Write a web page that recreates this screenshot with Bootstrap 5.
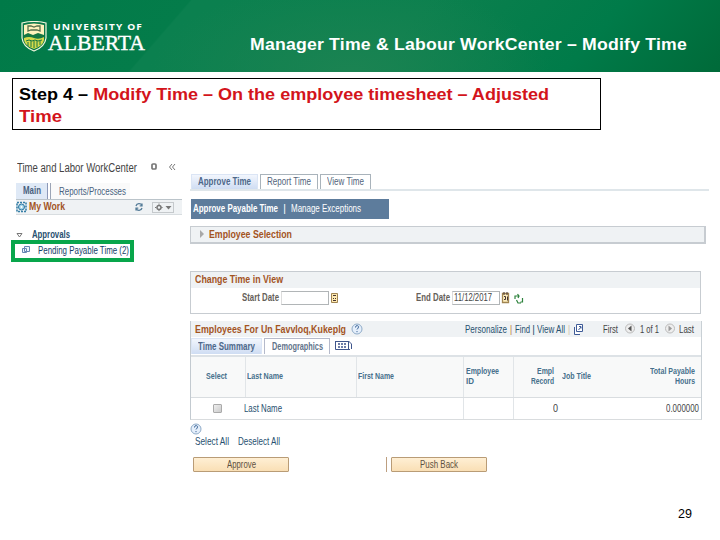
<!DOCTYPE html>
<html lang="en">
<head>
<meta charset="utf-8">
<meta name="viewport" content="width=device-width, initial-scale=1">
<title>Manager Time &amp; Labour WorkCenter – Modify Time</title>
<link href="https://cdn.jsdelivr.net/npm/bootstrap@5.3.0/dist/css/bootstrap.min.css" rel="stylesheet">
<style>
*{box-sizing:border-box}
body{width:720px;height:540px;overflow:hidden;background:#fff;font-family:"Liberation Sans",Arial,sans-serif;font-size:10.2px;line-height:12px;color:#444;white-space:nowrap}
[data-w]{display:inline-block;flex:none;white-space:nowrap;transform-origin:0 50%}
.topbar{height:72px;background:radial-gradient(ellipse 200px 90px at 350px 72px,#1b8352,transparent),linear-gradient(131deg,#007a48 0,#047c4a 24.3%,#0b804f 24.600%,#0c804e 55%,#007b49 80%,#006a39 100%);color:#fff;padding:20px 33px 0 21px}
.crest{margin-top:1px}
.uni{width:100px;margin-left:1px}
.uni .u1{font:bold 9px/9px "Open Sans",sans-serif;letter-spacing:1px;padding:2px 0 0 5px;height:12px}
.uni .u2{font:21.5px/20px "Liberation Serif",serif;-webkit-text-stroke:.4px #fff;padding-top:1px}
.uni .u2 span{line-height:18px}
.headline{font-size:17px;font-weight:700;line-height:20px;margin-top:15px;letter-spacing:.2px}
.step{margin:6px 0 0 12px;width:589px;height:52px;border:1px solid #000;padding:4px 6px 0;font-size:17.400px;line-height:22px;font-weight:700;color:#000}
.step .red{color:#d3141b}
.work{height:350px;margin-top:26px}
.left{width:190px;padding-left:16px}
.side-title{height:27px;padding:6px 0 0 1px;font-size:12px}
.side-tabs{height:16px;color:#49627f}
.side-tabs .on{width:32px;background:#dfe9f6;border-right:1px solid #8c98b8;font-weight:700;text-align:center;line-height:15px}
.side-tabs .off{width:80px;margin-left:2px;border-left:1px solid #9ca5b6;padding:3px 0 0 8px;background:#fafafa}
.mywork{width:166px;height:16px;background:#eff2f4;border-top:1px solid #bbc4ca;border-bottom:1px solid #d8dde0}
.brown{color:#a3541f;font-weight:700}
.navy{color:#27506f}
.gearbtn{width:22px;height:11px;border:1px solid #c5c9cc}
.pend{margin-left:-5px;width:123px;height:22px;border:4px solid #08a64b;color:#143d68}
.right{width:519px;padding-top:18px}
.tabs{height:17px;border-bottom:2px solid #dfe6ea;padding-left:1px}
.tabs>div{height:15px;line-height:14px;text-align:center;border:1px solid #a9b3bb;border-bottom:0;color:#52647b;margin-right:2px}
.tabs>.on,.grid-tabs>.on{background:linear-gradient(#f2f6fd,#cfddf3);border-color:#dbe5f5;font-weight:700;color:#4d688a}
.bluebar{margin:8px 0 0 1px;width:198px;height:20px;background:#5d7c9c;color:#fff;padding:0 0 1px 2px}
.selection{margin-top:7px;width:516px;height:18px;background:#eff2f4;border:1px solid #c7ccd1;border-bottom-width:2px;border-right-width:2px;padding-left:9px;padding-bottom:2px;font-size:11px}
.change{margin-top:27px;width:511px;height:43px;border:1px solid #c7ccd1}
.cap{height:16px;line-height:15px;background:#eff2f4;padding-left:4px}
.cap .brown,.change .cap{font-size:11px}
.dates{height:19px}
.dates b{color:#665f5a}
.field{width:48px;height:14px;border:1px solid #b1b5b7;border-left-color:#ddd;line-height:12px}
.employees{margin-top:7px;width:512px;height:99px;border-left:1px solid #c3cad0;border-right:1px solid #c9d0d5;border-bottom:1px solid #d9dcde}
.grid-tabs{height:18px;padding-top:1px}
.grid-tabs>div{height:16px;line-height:15px;border:1px solid #b5bacb;border-bottom:0;text-align:center;color:#62748b}
.cols{display:grid;grid-template-columns:55px 111px 107px 50px 43px 144px}
.heads{height:43px;background:#f8f9f9;border-top:2px solid #dde2e6;border-bottom:1px solid #d9dde0;font-weight:700;color:#46708c;font-size:9.2px;line-height:10px;padding-bottom:3px}
.heads>div,.vals>div{display:flex;align-items:center;border-right:1px solid #e1e5e8}
.heads>div{margin-bottom:-3px;padding-bottom:3px}
.heads>div:last-child,.vals>div:last-child{border-right:0}
.vals{height:21px}
.stack{display:flex;flex-direction:column;align-items:flex-end}
.cb{width:9px;height:9px;background:linear-gradient(135deg,#eee,#ccc);border:1px solid #aaa;border-radius:1px}
.act{width:96px;height:15px;line-height:13px;border:1px solid #b99c76;border-radius:1px;background:linear-gradient(#ffefd4,#f9dfb5);text-align:center;color:#5e5140}
.page-no{width:28px;margin-left:678px;font-size:12px;line-height:14px;color:#000;padding-top:1px}
svg{display:block;flex:none}
</style>
</head>
<body>
<header class="topbar d-flex justify-content-between">
 <div class="d-flex">
  <svg class="crest" width="26" height="31" viewBox="0 0 26 31"><path d="M1 2Q13-1 25 2V17Q24 26 13 30Q2 26 1 17Z" fill="#087848" stroke="#f5f8df" stroke-width="1.2"/><path d="M3 4Q13 1 23 4V14H3Z" fill="#fff3bd"/><path d="M7 10V5h3l3 1 3-1h3v5l-3-1H10Z" fill="#fff3bd" stroke="#54704c" stroke-width="1.3"/><path d="M3 14l4-2 5 2 5-2 6 2v3H3Z" fill="#157743"/><path d="M3 17q5-2 10 0t10-1v3q-1 6-10 9Q4 25 3 19Z" fill="#d5d94b"/><path d="M5 20l3-1 3 1 3-1 3 1 4-1M7 21v4m3-5v6m3-6v7m3-7v6m3-6v4" stroke="#187744" fill="none"/></svg>
  <div class="uni"><div class="u1"><span data-w="90">UNIVERSITY OF</span></div><div class="u2"><span data-w="97">ALBERTA</span></div></div>
 </div>
 <h1 class="headline mb-0"><span data-w="437">Manager Time &amp; Labour WorkCenter – Modify Time</span></h1>
</header>
<div class="step"><div><span data-w="530">Step 4 – <span class="red">Modify Time – On the employee timesheet – Adjusted</span></span></div><div class="red"><span data-w="43">Time</span></div></div>
<main class="work d-flex">
 <aside class="left">
  <div class="side-title d-flex"><span data-w="120">Time and Labor WorkCenter</span>
   <svg style="margin-left:14px" width="32" height="12" viewBox="0 0 32 12" fill="none" stroke="#777"><rect x="1" y="2" width="4" height="5" rx="1" stroke-width="1.7"/><path d="M21 2l-2.500 3 2.500 3m3-6l-2.500 3 2.500 3"/></svg></div>
  <div class="side-tabs d-flex"><div class="on"><span data-w="18">Main</span></div><div class="off"><span data-w="67">Reports/Processes</span></div></div>
  <div class="mywork d-flex align-items-center">
   <svg width="11" height="12" viewBox="0 0 11 12" fill="none"><rect x="1" y="1.5" width="9" height="9" stroke="#367fa7" stroke-width="1.6" stroke-dasharray="2 1"/><circle cx="5.5" cy="6" r="3" fill="#a5d5e8" stroke="#28739e"/><circle cx="5.5" cy="6" r="1" fill="#fff"/></svg>
   <span class="brown" style="margin-left:2px;margin-top:-3px;font-size:11px" data-w="36">My Work</span>
   <svg class="ms-auto me-2" width="10" height="10" viewBox="0 0 10 10" fill="none" stroke="#557c98" stroke-width="1.3"><path d="M2 4a3.200 3.200 0 0 1 6-.5M8 1.500v2.300H5.700M8 6a3.200 3.200 0 0 1-6 .5M2 8.500V6.200h2.300"/></svg>
   <div class="gearbtn me-2"><svg width="20" height="9" viewBox="0 0 20 9"><circle cx="6" cy="4.500" r="2" fill="none" stroke="#777" stroke-width="1.5"/><path d="M6 .5v8M2 4.500h8" stroke="#777" stroke-dasharray="1.3 5"/><path d="M12.500 3h6L15.500 6.500Z" fill="#777"/></svg></div>
  </div>
  <div class="d-flex align-items-end fw-bold navy" style="height:25px">
   <svg width="16" height="9" viewBox="0 0 16 9"><path d="M1 2.500h5L3.500 6Z" fill="#fff" stroke="#777"/></svg><span style="line-height:10px" data-w="38">Approvals</span></div>
  <div class="pend d-flex align-items-center">
   <svg width="22.500" height="12" viewBox="0 0 22.500 12" fill="#eef4fc" stroke="#6685b3"><path d="M9.500 1.500h5v5h-5ZM7.500 3.500h4v4H7.500Z"/></svg><span data-w="91">Pending Payable Time (2)</span></div>
 </aside>
 <section class="right">
  <div class="tabs d-flex"><div class="on" style="width:67px"><span data-w="53">Approve Time</span></div><div style="width:58px"><span data-w="44">Report Time</span></div><div style="width:51px"><span data-w="37">View Time</span></div></div>
  <div class="bluebar d-flex align-items-center"><b data-w="85">Approve Payable Time</b><span class="text-center" style="width:13px">|</span><span data-w="70">Manage Exceptions</span></div>
  <div class="selection d-flex align-items-center"><svg width="8.500" height="10" viewBox="0 0 8.500 10"><path d="M0 1l4 4-4 4Z" fill="#a8a8a8"/></svg><span class="brown" data-w="83">Employee Selection</span></div>
  <div class="change"><div class="cap brown"><span data-w="88">Change Time in View</span></div>
   <div class="dates d-flex align-items-center"><b style="padding-left:51px"></b><b data-w="37">Start Date</b><div class="field" style="margin-left:2px"></div>
    <svg width="11" height="12" viewBox="0 0 11 12"><path d="M2.500 1.500h6v9h-6Z" fill="#ffeab1" stroke="#a18551"/><path d="M4 3.500h3M4 6.500h1m1 0h1M4 8.500h3" stroke="#433"/></svg>
    <div style="margin-left:76px"><b data-w="34">End Date</b></div><div class="field" style="margin-left:2px;padding-left:1px"><span data-w="38">11/12/2017</span></div>
    <svg width="24" height="14" viewBox="0 0 24 14" fill="none"><path d="M2.500 2.500h6v9h-6Z" fill="#ffefbd" stroke="#a18551" stroke-width="1.3"/><path d="M4 1v3m3-3v3M4 5.500h1.500v3H4m3.500-3v4" stroke="#433"/><path d="M15 8V5h4M17.500 3L19 5l-1 2M16.500 9l1.500 3H21m1.500-5v4h-2" stroke="#2d823c" stroke-width="1.2"/></svg>
   </div></div>
  <div class="employees">
   <div class="cap d-flex align-items-center"><span class="brown" data-w="151">Employees For Un Favvloq,Kukeplg</span><svg style="margin-left:5px" width="12" height="12" viewBox="0 0 12 12"><circle cx="6" cy="6" r="5" fill="#e5effb" stroke="#8fabc8"/><path d="M4.500 4.500q0-2 1.700-2 2.300.6 1 2.500L6 6.500M6 8v1.200" fill="none" stroke="#416a9b"/></svg>
    <div class="d-flex align-items-center navy" style="margin-left:102px"><span data-w="42">Personalize</span><span class="text-center" style="width:8px;color:#c49158">|</span><span data-w="15">Find</span><span class="text-center" style="width:7px">|</span><span data-w="28">View All</span><span class="text-center" style="width:8px;color:#d3cbb5">|</span>
    <svg width="11" height="13" viewBox="0 0 11 13" fill="#fff" stroke="#3f5c98"><path d="M3.500 1.500h6v7h-6ZM1.500 4v7.500H7M5.500 7L8 4M6 3.500h2v2"/></svg></div>
    <div style="margin-left:19px"><span data-w="15">First</span></div><svg style="margin-left:6px" width="12" height="12" viewBox="0 0 12 12"><circle cx="6" cy="5.500" r="4.500" fill="#eee" stroke="#bbb"/><path d="M7.500 2.500v6L4 5.500Z" fill="#555"/></svg><div style="margin-left:4px"><span data-w="19">1 of 1</span></div><svg style="margin-left:5px" width="12" height="12" viewBox="0 0 12 12"><circle cx="6" cy="5.500" r="4.500" fill="#eee" stroke="#bbb"/><path d="M4.500 2.500v6L8 5.500Z" fill="#999"/></svg><div style="margin-left:3px"><span data-w="15">Last</span></div></div>
   <div class="grid-tabs d-flex"><div class="on" style="width:71px"><span data-w="57">Time Summary</span></div><div class="fw-bold" style="width:66px;margin-left:2px"><span data-w="51">Demographics</span></div><svg class="ms-1" width="19" height="14" viewBox="0 0 19 14" fill="none" stroke="#40568c"><path d="M1.500 3v8.500H16M1.500 3.500H14M14.500 3l3 3v5M14.500 3v8"/><path d="M4 6h9M4 9h9" stroke-width="1.500" stroke-dasharray="2 1"/></svg></div>
   <div class="heads cols"><div style="padding-left:15px"><span data-w="21">Select</span></div><div style="padding-left:1px"><span data-w="36">Last Name</span></div><div style="padding-left:1px"><span data-w="36">First Name</span></div><div style="padding-left:2px"><div class="stack align-items-start"><span data-w="33">Employee</span><span data-w="8">ID</span></div></div><div class="justify-content-end border-0" style="padding-right:3px"><div class="stack"><span data-w="17">Empl</span><span data-w="23">Record</span></div></div><div class="justify-content-between" style="padding-left:5px;padding-right:6px"><span data-w="29">Job Title</span><div class="stack"><span data-w="45">Total Payable</span><span data-w="20">Hours</span></div></div></div>
   <div class="vals cols"><div class="justify-content-center border-0"><span class="cb" style="margin-right:3px"></span></div><div class="navy border-0"><div style="margin-left:-2px"><span data-w="38">Last Name</span></div></div><div></div><div></div><div class="justify-content-end border-0"><span style="margin-right:-1px"><span data-w="5">0</span></span></div><div class="justify-content-end" style="padding-right:2px"><span data-w="33">0.000000</span></div></div>
  </div>
  <div style="height:16px;padding-top:3px"><svg width="12" height="12" viewBox="0 0 12 12"><circle cx="6" cy="6" r="5" fill="#e5effb" stroke="#8fabc8"/><path d="M4.500 4.500q0-2 1.700-2 2.300.6 1 2.500L6 6.500M6 8v1.200" fill="none" stroke="#416a9b"/></svg></div>
  <div class="d-flex navy" style="padding-left:5px;gap:9px"><div><span data-w="34">Select All</span></div><div><span data-w="42">Deselect All</span></div></div>
  <div class="d-flex" style="margin-top:9px;padding-left:3px"><div class="act"><span data-w="29">Approve</span></div><div style="width:98px;border-right:1px solid #bd9f80"></div><div class="act" style="margin-left:4px"><span data-w="38">Push Back</span></div></div>
 </section>
</main>
<div class="page-no"><span data-w="14">29</span></div>
<script>
document.querySelectorAll('[data-w]').forEach(function (el) {
  var natural = el.getBoundingClientRect().width, target = +el.dataset.w;
  el.style.transform = 'scaleX(' + target / natural + ')';
  if (!el.classList.contains('brown') || !el.parentElement.classList.contains('mywork')) {
    el.style.marginRight = (target - natural) + 'px';
  }
});
</script>
<script src="https://cdn.jsdelivr.net/npm/bootstrap@5.3.0/dist/js/bootstrap.bundle.min.js"></script>
</body>
</html>
